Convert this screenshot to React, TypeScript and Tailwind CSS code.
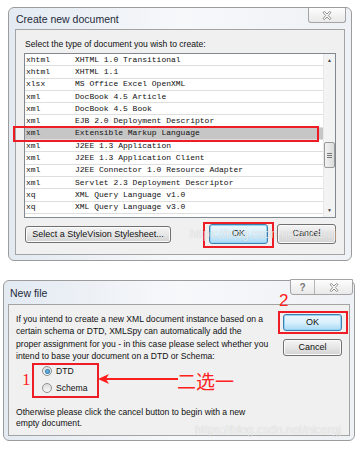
import { FC, ReactNode } from "react";

interface RowType {
    ext: string;
    name: string;
    selected?: boolean;
}

const rows: RowType[] = [
    { ext: "xhtml", name: "XHTML 1.0 Transitional" },
    { ext: "xhtml", name: "XHTML 1.1" },
    { ext: "xlsx", name: "MS Office Excel OpenXML" },
    { ext: "xml", name: "DocBook 4.5 Article" },
    { ext: "xml", name: "DocBook 4.5 Book" },
    { ext: "xml", name: "EJB 2.0 Deployment Descriptor" },
    { ext: "xml", name: "Extensible Markup Language", selected: true },
    { ext: "xml", name: "J2EE 1.3 Application" },
    { ext: "xml", name: "J2EE 1.3 Application Client" },
    { ext: "xml", name: "J2EE Connector 1.0 Resource Adapter" },
    { ext: "xml", name: "Servlet 2.3 Deployment Descriptor" },
    { ext: "xq", name: "XML Query Language v1.0" },
    { ext: "xq", name: "XML Query Language v3.0" },
    { ext: "xq", name: "XML Query Update Facility" },
];

const WinButton: FC<{ children: ReactNode; focused?: boolean; className?: string }> = ({ children, focused, className }) => (
    <div
        className={`${className ?? ""} flex items-center justify-center rounded-[3px] border text-[9px] text-[#111] ${
            focused
                ? "border-[#3c7fb1] bg-linear-to-b from-[#eaf6fd] via-[#d9f0fc] to-[#a7d9f5] shadow-[inset_0_0_0_1px_#97d4f3]"
                : "border-[#707070] bg-linear-to-b from-[#f4f4f4] via-[#e6e6e6] to-[#d2d2d2] shadow-[inset_0_0_0_1px_#fbfbfb]"
        }`}
    >
        {children}
    </div>
);

const CloseGlyph = () => (
    <svg width="10" height="9" viewBox="0 0 10 9">
        <path
            d="M1 1.5 L2.5 0.5 L5 3 L7.5 0.5 L9 1.5 L6.3 4.5 L9 7.5 L7.5 8.5 L5 6 L2.5 8.5 L1 7.5 L3.7 4.5 Z"
            fill="#fafafa"
            stroke="#7a7a7a"
            strokeWidth="0.8"
        />
    </svg>
);

const Radio = ({ checked }: { checked?: boolean }) => (
    <div className="w-[10px] h-[10px] rounded-full border border-[#8e8f8f] bg-linear-to-b from-[#dcdcdc] to-[#f8f8f8] flex items-center justify-center">
        {checked && <div className="w-[5px] h-[5px] rounded-full bg-radial from-[#6fc3f0] to-[#12578f]" />}
    </div>
);

const DocList = () => (
    <div className="ml-[8px] mt-[3px] w-[312px] h-[165px] border border-[#828790] bg-white flex overflow-hidden">
        <div className="flex-1 flex flex-col font-['Liberation_Mono',monospace] text-[8px] text-[#111]">
            {rows.map((row, i) => (
                <div
                    key={i}
                    className={`h-[12.3px] shrink-0 flex items-center border-b border-[#dedede] whitespace-nowrap ${row.selected ? "bg-[#c6c6c6]" : ""}`}
                >
                    <span className="w-[50px] pl-[1px]">{row.ext}</span>
                    <span>{row.name}</span>
                </div>
            ))}
        </div>
        <div className="w-[12px] border-l border-[#e8e8e8] bg-[#f3f3f3] flex flex-col items-center">
            <div className="h-[14px] flex items-center justify-center text-[5px] text-[#444]">▲</div>
            <div className="h-[74px]" />
            <div className="w-[11px] h-[26px] rounded-[2px] border border-[#9a9a9a] bg-linear-to-r from-[#f2f2f2] to-[#dcdcdc] flex flex-col items-center justify-center gap-[1px]">
                <div className="w-[5px] h-px bg-[#777]" />
                <div className="w-[5px] h-px bg-[#777]" />
                <div className="w-[5px] h-px bg-[#777]" />
            </div>
            <div className="flex-1" />
            <div className="h-[12px] flex items-center justify-center text-[5px] text-[#444]">▼</div>
        </div>
    </div>
);

const Watermark = ({ className }: { className: string }) => (
    <div className={`${className} absolute text-[12px] text-white/70 [text-shadow:0_0_1px_rgba(0,0,0,0.2)] whitespace-nowrap pointer-events-none`}>
        https://blog.csdn.net/nicergj
    </div>
);

const App = () => {
    return (
        <div className="relative w-[361px] h-[450px] bg-white overflow-hidden flex flex-col font-['Liberation_Sans',Arial,sans-serif]">
            {/* Create new document */}
            <div className="ml-[8px] mt-[7px] w-[344px] h-[254px] rounded-[6px] border border-[#9c9c9c] bg-linear-to-r from-[#e3eaf2] via-[#f7f8fa] to-[#eef1f5] flex flex-col">
                <div className="h-[21px] flex justify-between items-start">
                    <div className="pl-[7px] pt-[4px] text-[10.5px] text-[#1e2a3a]">Create new document</div>
                    <div className="mr-[5px] w-[38px] h-[15px] rounded-b-[3px] border border-t-0 border-[#a4a4a4] bg-linear-to-b from-[#fdfdfd] to-[#e9e9e9] flex items-center justify-center">
                        <CloseGlyph />
                    </div>
                </div>
                <div className="mx-[6px] mb-[5px] flex-1 border border-[#a3a3a3] bg-[#f0f0f0] flex flex-col">
                    <div className="pl-[9px] pt-[8px] text-[8.6px] leading-[12px] text-[#111]">
                        Select the type of document you wish to create:
                    </div>
                    <DocList />
                    <div className="mt-[6px] flex items-start">
                        <WinButton className="ml-[9px] mt-[2px] w-[146px] h-[17px]">Select a StyleVision Stylesheet...</WinButton>
                        <div className="flex-1" />
                        <WinButton focused className="w-[59px] h-[20px]">OK</WinButton>
                        <WinButton className="ml-[9px] mr-[8px] w-[59px] h-[20px]">Cancel</WinButton>
                    </div>
                </div>
            </div>

            {/* New file */}
            <div className="ml-[3px] mt-[19px] w-[352px] h-[161px] rounded-[6px] border border-[#9c9c9c] bg-linear-to-r from-[#e3eaf2] via-[#f7f8fa] to-[#eef1f5] flex flex-col">
                <div className="h-[23px] flex justify-between items-start">
                    <div className="pl-[6px] pt-[5px] text-[10.5px] text-[#1e2a3a]">New file</div>
                    <div className="mr-[1px] -mt-[2px] w-[63px] h-[16px] rounded-b-[3px] border border-[#a4a4a4] bg-linear-to-b from-[#fdfdfd] to-[#e9e9e9] flex">
                        <div className="w-[23px] flex items-center justify-center text-[10px] text-[#777] font-bold">?</div>
                        <div className="flex-1 border-l border-[#b4b4b4] flex items-center justify-center">
                            <CloseGlyph />
                        </div>
                    </div>
                </div>
                <div className="mx-[4px] mb-[4px] flex-1 border border-[#a3a3a3] bg-[#f0f0f0] flex">
                    <div className="flex-1 pl-[7px] pt-[8px] text-[8.6px] text-[#111] whitespace-nowrap">
                        <div className="leading-[12.4px]">
                            If you intend to create a new XML document instance based on a<br />
                            certain schema or DTD, XMLSpy can automatically add the<br />
                            proper assignment for you - in this case please select whether you<br />
                            intend to base your document on a DTD or Schema:
                        </div>
                        <div className="pl-[26px] flex flex-col">
                            <div className="h-[17px] flex items-center gap-[4px]">
                                <Radio checked />
                                <span>DTD</span>
                            </div>
                            <div className="h-[17px] flex items-center gap-[4px]">
                                <Radio />
                                <span>Schema</span>
                            </div>
                        </div>
                        <div className="mt-[10px] leading-[11px]">
                            Otherwise please click the cancel button to begin with a new<br />
                            empty document.
                        </div>
                    </div>
                    <div className="pr-[7px] pt-[9px] flex flex-col gap-[8px]">
                        <WinButton focused className="w-[59px] h-[17px]">OK</WinButton>
                        <WinButton className="w-[59px] h-[17px]">Cancel</WinButton>
                    </div>
                </div>
            </div>

            {/* annotations */}
            <div className="absolute left-[13px] top-[126px] w-[306px] h-[16px] border-2 border-[#ee1c25]" />
            <div className="absolute left-[203px] top-[222px] w-[71px] h-[26px] border-2 border-[#ee1c25]" />
            <Watermark className="left-[190px] top-[225px]" />

            <div className="absolute left-[279px] top-[292px] text-[17px] leading-[17px] text-[#ff2020]">2</div>
            <div className="absolute left-[278px] top-[311px] w-[70px] h-[23px] border-2 border-[#ee1c25]" />
            <div className="absolute left-[32px] top-[363px] w-[67px] h-[35px] border-2 border-[#ee1c25]" />
            <div className="absolute left-[22px] top-[371px] text-[17px] leading-[17px] font-['Liberation_Serif',serif] text-[#ff2020]">1</div>
            <svg className="absolute left-[98px] top-[373px]" width="80" height="12" viewBox="0 0 80 12">
                <line x1="8" y1="6" x2="80" y2="6" stroke="#ff1e1e" strokeWidth="2" />
                <polygon points="0,6 11,1 8,6 11,11" fill="#ff1e1e" />
            </svg>
            <div className="absolute left-[177px] top-[370px] text-[19px] leading-[22px] text-[#ff2020] font-['Noto_Sans_CJK_SC',sans-serif]">二选一</div>
            <Watermark className="left-[195px] top-[421px]" />
        </div>
    );
};

export default App;
